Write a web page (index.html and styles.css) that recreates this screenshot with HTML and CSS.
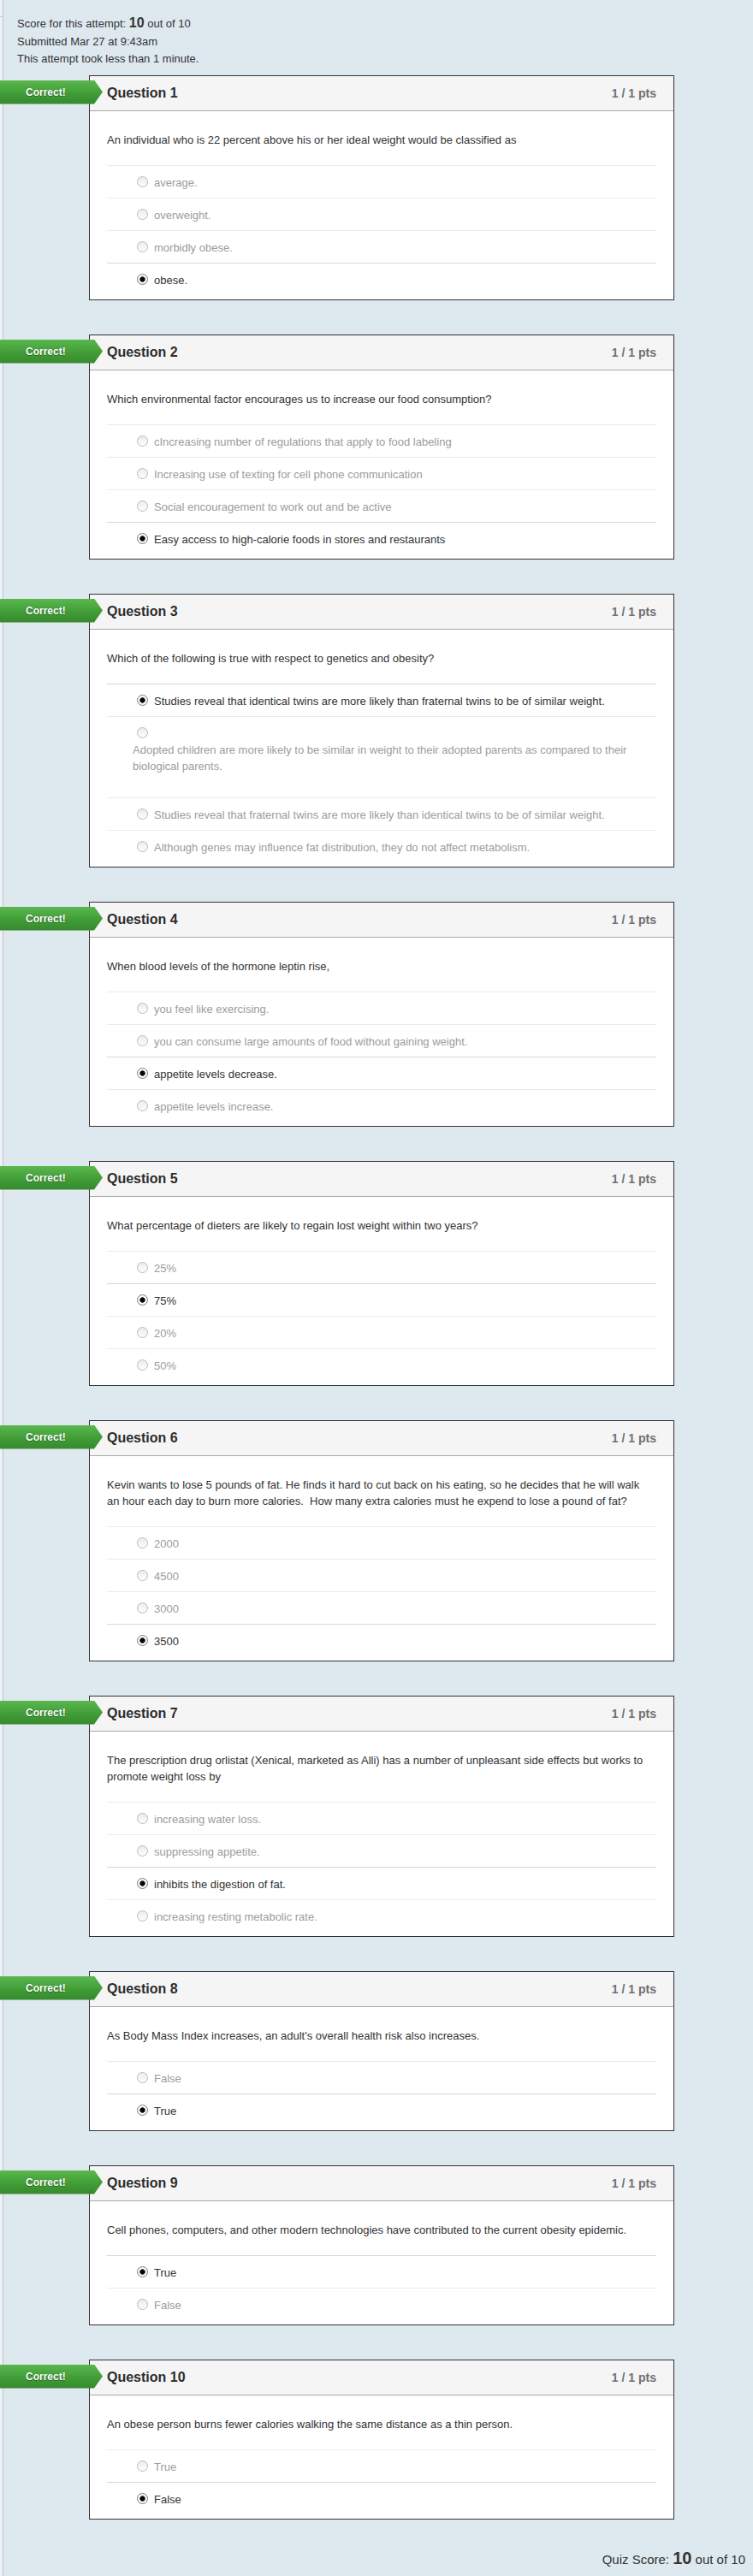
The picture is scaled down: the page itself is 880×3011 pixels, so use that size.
FILE: index.html
```html
<!DOCTYPE html>
<html lang="en">
<head>
<meta charset="utf-8">
<title>Quiz Results</title>
<link rel="stylesheet" href="styles.css">
</head>
<body>
<div class="layout">
  <div class="edge"><div class="edge-mark"></div></div>
  <main class="content">
    <div class="summary">
      <div>Score for this attempt: <b class="big">10</b> out of 10</div>
      <div>Submitted Mar 27 at 9:43am</div>
      <div>This attempt took less than 1 minute.</div>
    </div>

    <div class="questions">
      <section class="question">
        <div class="banner">Correct!</div>
        <header class="q-head"><h2 class="q-title">Question 1</h2><span class="q-pts">1 / 1 pts</span></header>
        <div class="q-body">
          <div class="q-text">An individual who is 22 percent above his or her ideal weight would be classified as</div>
          <div class="answer"><span class="radio"></span><span class="label">average.</span></div>
          <div class="answer"><span class="radio"></span><span class="label">overweight.</span></div>
          <div class="answer"><span class="radio"></span><span class="label">morbidly obese.</span></div>
          <div class="answer selected"><span class="radio"></span><span class="label">obese.</span></div>
        </div>
      </section>

      <section class="question">
        <div class="banner">Correct!</div>
        <header class="q-head"><h2 class="q-title">Question 2</h2><span class="q-pts">1 / 1 pts</span></header>
        <div class="q-body">
          <div class="q-text">Which environmental factor encourages us to increase our food consumption?</div>
          <div class="answer"><span class="radio"></span><span class="label">cIncreasing number of regulations that apply to food labeling</span></div>
          <div class="answer"><span class="radio"></span><span class="label">Increasing use of texting for cell phone communication</span></div>
          <div class="answer"><span class="radio"></span><span class="label">Social encouragement to work out and be active</span></div>
          <div class="answer selected"><span class="radio"></span><span class="label">Easy access to high-calorie foods in stores and restaurants</span></div>
        </div>
      </section>

      <section class="question">
        <div class="banner">Correct!</div>
        <header class="q-head"><h2 class="q-title">Question 3</h2><span class="q-pts">1 / 1 pts</span></header>
        <div class="q-body">
          <div class="q-text">Which of the following is true with respect to genetics and obesity?</div>
          <div class="answer selected"><span class="radio"></span><span class="label">Studies reveal that identical twins are more likely than fraternal twins to be of similar weight.</span></div>
          <div class="answer long"><span class="radio"></span><span class="label">Adopted children are more likely to be similar in weight to their adopted parents as compared to their biological parents.</span></div>
          <div class="answer"><span class="radio"></span><span class="label">Studies reveal that fraternal twins are more likely than identical twins to be of similar weight.</span></div>
          <div class="answer"><span class="radio"></span><span class="label">Although genes may influence fat distribution, they do not affect metabolism.</span></div>
        </div>
      </section>

      <section class="question">
        <div class="banner">Correct!</div>
        <header class="q-head"><h2 class="q-title">Question 4</h2><span class="q-pts">1 / 1 pts</span></header>
        <div class="q-body">
          <div class="q-text">When blood levels of the hormone leptin rise,</div>
          <div class="answer"><span class="radio"></span><span class="label">you feel like exercising.</span></div>
          <div class="answer"><span class="radio"></span><span class="label">you can consume large amounts of food without gaining weight.</span></div>
          <div class="answer selected"><span class="radio"></span><span class="label">appetite levels decrease.</span></div>
          <div class="answer"><span class="radio"></span><span class="label">appetite levels increase.</span></div>
        </div>
      </section>

      <section class="question">
        <div class="banner">Correct!</div>
        <header class="q-head"><h2 class="q-title">Question 5</h2><span class="q-pts">1 / 1 pts</span></header>
        <div class="q-body">
          <div class="q-text">What percentage of dieters are likely to regain lost weight within two years?</div>
          <div class="answer"><span class="radio"></span><span class="label">25%</span></div>
          <div class="answer selected"><span class="radio"></span><span class="label">75%</span></div>
          <div class="answer"><span class="radio"></span><span class="label">20%</span></div>
          <div class="answer"><span class="radio"></span><span class="label">50%</span></div>
        </div>
      </section>

      <section class="question">
        <div class="banner">Correct!</div>
        <header class="q-head"><h2 class="q-title">Question 6</h2><span class="q-pts">1 / 1 pts</span></header>
        <div class="q-body">
          <div class="q-text">Kevin wants to lose 5 pounds of fat. He finds it hard to cut back on his eating, so he decides that he will walk an hour each day to burn more calories.&nbsp; How many extra calories must he expend to lose a pound of fat?</div>
          <div class="answer"><span class="radio"></span><span class="label">2000</span></div>
          <div class="answer"><span class="radio"></span><span class="label">4500</span></div>
          <div class="answer"><span class="radio"></span><span class="label">3000</span></div>
          <div class="answer selected"><span class="radio"></span><span class="label">3500</span></div>
        </div>
      </section>

      <section class="question">
        <div class="banner">Correct!</div>
        <header class="q-head"><h2 class="q-title">Question 7</h2><span class="q-pts">1 / 1 pts</span></header>
        <div class="q-body">
          <div class="q-text">The prescription drug orlistat (Xenical, marketed as Alli) has a number of unpleasant side effects but works to promote weight loss by</div>
          <div class="answer"><span class="radio"></span><span class="label">increasing water loss.</span></div>
          <div class="answer"><span class="radio"></span><span class="label">suppressing appetite.</span></div>
          <div class="answer selected"><span class="radio"></span><span class="label">inhibits the digestion of fat.</span></div>
          <div class="answer"><span class="radio"></span><span class="label">increasing resting metabolic rate.</span></div>
        </div>
      </section>

      <section class="question">
        <div class="banner">Correct!</div>
        <header class="q-head"><h2 class="q-title">Question 8</h2><span class="q-pts">1 / 1 pts</span></header>
        <div class="q-body">
          <div class="q-text">As Body Mass Index increases, an adult's overall health risk also increases.</div>
          <div class="answer"><span class="radio"></span><span class="label">False</span></div>
          <div class="answer selected"><span class="radio"></span><span class="label">True</span></div>
        </div>
      </section>

      <section class="question">
        <div class="banner">Correct!</div>
        <header class="q-head"><h2 class="q-title">Question 9</h2><span class="q-pts">1 / 1 pts</span></header>
        <div class="q-body">
          <div class="q-text">Cell phones, computers, and other modern technologies have contributed to the current obesity epidemic.</div>
          <div class="answer selected"><span class="radio"></span><span class="label">True</span></div>
          <div class="answer"><span class="radio"></span><span class="label">False</span></div>
        </div>
      </section>

      <section class="question">
        <div class="banner">Correct!</div>
        <header class="q-head"><h2 class="q-title">Question 10</h2><span class="q-pts">1 / 1 pts</span></header>
        <div class="q-body">
          <div class="q-text">An obese person burns fewer calories walking the same distance as a thin person.</div>
          <div class="answer"><span class="radio"></span><span class="label">True</span></div>
          <div class="answer selected"><span class="radio"></span><span class="label">False</span></div>
        </div>
      </section>
    </div>

    <div class="final-score">Quiz Score: <b class="bigger">10</b> out of 10</div>
  </main>
</div>
</body>
</html>
```

FILE: styles.css
```css
html, body {
  margin: 0;
  padding: 0;
}

body {
  background: #dee8ef;
  font-family: "Liberation Sans", Arial, Helvetica, sans-serif;
  color: #333;
}

.layout {
  display: flex;
  min-height: 3011px;
}

.edge {
  width: 3px;
  flex: 0 0 3px;
  background: #eef2f5;
  border-right: 1px solid #bfc5ca;
  position: relative;
}

.edge-mark {
  height: 19px;
  border-bottom: 1px solid #c4c9cd;
}

.content {
  flex: 1;
  min-width: 0;
}

.summary {
  padding: 17px 0 0 16px;
  font-size: 13px;
  line-height: 20.5px;
  color: #333;
}

.big {
  font-size: 16px;
  font-weight: bold;
}

.questions {
  margin-top: 8px;
  display: flex;
  flex-direction: column;
  gap: 40px;
}

.question {
  position: relative;
  margin-left: 100px;
  width: 684px;
  box-sizing: border-box;
  border: 1px solid #333;
  background: #fff;
}

.banner {
  position: absolute;
  left: -105px;
  top: 5px;
  width: 120px;
  height: 28px;
  line-height: 28px;
  padding-left: 30px;
  box-sizing: border-box;
  color: #fff;
  font-size: 12px;
  font-weight: bold;
  text-shadow: 0 0 1px #1d5e14, 0 1px 0 #2b6d22;
  background: linear-gradient(#5ab84e, #3f9a35 60%, #37892d);
  clip-path: polygon(0 0, 110px 0, 120px 50%, 110px 100%, 0 100%);
  z-index: 2;
}

.q-head {
  display: flex;
  align-items: center;
  justify-content: space-between;
  height: 40px;
  padding: 0 20px;
  background: #f5f5f5;
  border-bottom: 1px solid #a9a9a9;
}

.q-title {
  margin: 0;
  font-size: 16px;
  font-weight: bold;
  color: #2d2d2d;
}

.q-pts {
  font-size: 14px;
  font-weight: bold;
  color: #707070;
}

.q-body {
  padding: 24px 20px 5px;
  font-size: 13px;
}

.q-text {
  line-height: 19px;
  margin: 0 10px 20px 0;
  color: #333;
}

.answer {
  border-top: 1px solid #ebebeb;
  padding: 10px 0 8px 30px;
  line-height: 19px;
  color: #9c9c9c;
}

.answer.selected {
  border-top-color: #d8d8d8;
  color: #333;
}

.radio {
  display: inline-block;
  width: 13px;
  height: 13px;
  margin-left: 5px;
  box-sizing: border-box;
  border-radius: 50%;
  border: 1px solid #b9b9b9;
  background: linear-gradient(#ececec, #fdfdfd);
  vertical-align: -1px;
}

.selected .radio {
  border-color: #7c7c7c;
  background: radial-gradient(circle at 50% 50%, #000 0, #111 2.8px, #fff 3.6px, #f2f2f2 6px);
}

.label {
  display: inline-block;
  margin-left: 7px;
}

.answer.long .label {
  display: block;
  margin: 0 0 19px 0;
}

.final-score {
  margin-top: 35px;
  padding: 0 9px 11px 0;
  text-align: right;
  font-size: 15px;
  line-height: 20px;
  color: #333;
}

.bigger {
  font-size: 20px;
  font-weight: bold;
}
```
